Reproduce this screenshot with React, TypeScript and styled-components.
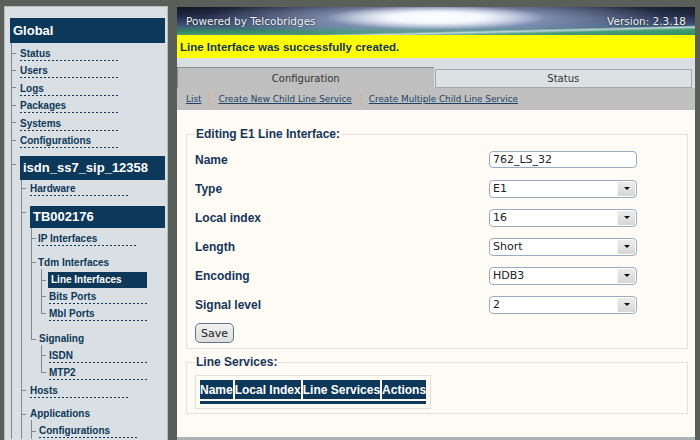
import styled, { createGlobalStyle } from "styled-components"

const GlobalStyle = createGlobalStyle`
body {
  margin: 0;
  background: #5b5f5a;
  font-family: "Liberation Sans", Arial, sans-serif;
  overflow: hidden;
}
`

const NAVY = "#0d3859"

const Page = styled.div`
display: flex;
align-items: flex-start;
padding-left: 4px;
height: 440px;
overflow: hidden;
`

/* ---------- sidebar ---------- */

const Sidebar = styled.div`
box-sizing: border-box;
width: 164px;
min-height: 480px;
margin-top: 6px;
background: #d9dfe2;
border: 1px solid #b5bcc0;
padding: 11px 2px 0 5px;
`

const Block = styled.div<{ $h: number }>`
background: ${NAVY};
color: #fff;
font-weight: bold;
font-size: 13px;
height: ${({ $h }) => $h}px;
line-height: ${({ $h }) => $h}px;
padding-left: 3px;
`

const Tree = styled.ul<{ $ml: number }>`
list-style: none;
margin: 0 0 0 ${({ $ml }) => $ml}px;
padding: 0;
`

const Node = styled.li<{ $pl: number; $pt: number; $tick: number; $last?: boolean }>`
position: relative;
padding-left: ${({ $pl }) => $pl}px;
padding-top: ${({ $pt }) => $pt}px;
&::before {
  content: "";
  position: absolute;
  left: 0;
  top: 0;
  ${({ $last, $tick }) => ($last ? `height: ${$tick}px;` : "bottom: 0;")}
  border-left: 1px solid #7f888d;
}
&::after {
  content: "";
  position: absolute;
  left: 0;
  top: ${({ $tick }) => $tick}px;
  width: 5px;
  border-top: 1px solid #7f888d;
}
`

const MenuLink = styled.div`
width: 98px;
font-size: 10px;
font-weight: bold;
color: ${NAVY};
line-height: 12px;
padding-top: 1px;
padding-bottom: 1px;
border-bottom: 1px solid transparent;
background: repeating-linear-gradient(to right, ${NAVY} 0 2px, transparent 2px 4px) left bottom / 100% 1px no-repeat;
`

const MenuHead = styled.div`
font-size: 10px;
font-weight: bold;
color: ${NAVY};
line-height: 12px;
padding-top: 1px;
`

const MenuActive = styled.div`
width: 96px;
height: 16px;
line-height: 16px;
padding-left: 3px;
background: ${NAVY};
color: #fff;
font-size: 10px;
font-weight: bold;
`

/* ---------- main ---------- */

const Main = styled.div`
margin-left: 9px;
margin-top: 7px;
width: 518px;
display: flex;
flex-direction: column;
`

const Banner = styled.div`
height: 28px;
display: flex;
justify-content: space-between;
align-items: center;
padding: 0 9px 0 9px;
color: #f2f4f8;
font-family: "DejaVu Sans", Verdana, sans-serif;
font-size: 10.5px;
text-shadow: 0 0 2px rgba(0, 0, 0, 0.7);
background:
  radial-gradient(ellipse 110px 12px at 50% 38%, #ffffff 0%, rgba(248, 250, 255, 0.95) 45%, rgba(180, 200, 240, 0) 100%),
  radial-gradient(ellipse 230px 20px at 50% 36%, rgba(200, 212, 245, 0.85), rgba(90, 110, 160, 0) 100%),
  radial-gradient(ellipse 360px 28px at 52% 30%, rgba(120, 140, 190, 0.6), rgba(40, 50, 90, 0) 100%),
  linear-gradient(178.6deg, rgba(0, 0, 0, 0) 76%, rgba(235, 248, 240, 0.85) 80%, rgba(60, 160, 105, 0.95) 86%, #2f8f5e 100%),
  linear-gradient(to bottom, #04050c 0%, #0c1226 28%, #2c3a5c 55%, #3a5f70 72%, #2e8a5c 88%, #4f9a74 100%);
`

const Message = styled.div`
background: #ffff00;
height: 23px;
line-height: 24px;
padding-left: 3px;
font-size: 11.5px;
font-weight: bold;
color: #17365a;
`

const Spacer = styled.div`
height: 9px;
background: #d9dfe2;
`

const Tabs = styled.div`
display: flex;
gap: 1px;
height: 21px;
background: #d9dfe2;
padding-right: 3px;
`

const Tab = styled.div<{ $active?: boolean }>`
box-sizing: border-box;
flex: 1;
margin-top: ${({ $active }) => ($active ? 0 : 2)}px;
background: ${({ $active }) => ($active ? "#bfbfbf" : "#dce1e4")};
border: 1px solid ${({ $active }) => ($active ? "#8d8d8d" : "#a3a7aa")};
border-bottom: ${({ $active }) => ($active ? "none" : "1px solid #a3a7aa")};
border-right: ${({ $active }) => ($active ? "none" : "1px solid #a3a7aa")};
display: flex;
align-items: center;
justify-content: center;
font-family: "DejaVu Sans", Verdana, sans-serif;
font-size: 10px;
color: #333;
`

const LinkBar = styled.div`
height: 22px;
background: #c0c0c0;
display: flex;
align-items: center;
gap: 8px;
padding-left: 9px;
font-family: "DejaVu Sans", Verdana, sans-serif;
font-size: 8.85px;
`

const NavLink = styled.span`
color: #1d4263;
text-decoration: underline;
`

const Sep = styled.span`
height: 12px;
border-left: 1px dashed #e2a86a;
`

const Content = styled.div`
height: 327px;
background: #fdfbf3;
padding-top: 17px;
box-sizing: border-box;
`

const Fieldset = styled.fieldset<{ $mt?: number }>`
margin: ${({ $mt }) => $mt || 0}px 7px 0 9px;
padding: 0 8px ${({ $mt }) => ($mt ? 4 : 5)}px 8px;
border: 1px solid #e3e1da;
`

const Legend = styled.legend`
padding: 0 1px;
font-size: 12px;
font-weight: bold;
color: #17365a;
line-height: 14px;
`

const FormGrid = styled.div`
display: grid;
grid-template-columns: 294px 148px;
grid-auto-rows: 29px;
align-items: center;
padding-top: 4px;
`

const Label = styled.div`
font-size: 12px;
font-weight: bold;
color: #17365a;
`

const TextInput = styled.div`
box-sizing: border-box;
height: 17px;
border: 1px solid #98adc4;
border-radius: 4px;
background: #fff;
padding-left: 3px;
font-family: "DejaVu Sans", Verdana, sans-serif;
font-size: 11px;
line-height: 15px;
color: #222;
`

const SelectBox = styled.div`
box-sizing: border-box;
height: 18px;
border: 1px solid #98adc4;
border-radius: 4px;
background: #fff;
display: flex;
align-items: center;
justify-content: space-between;
padding: 0 1px 0 3px;
font-family: "DejaVu Sans", Verdana, sans-serif;
font-size: 11px;
color: #222;
`

const Arrow = styled.span`
width: 17px;
height: 14px;
background: linear-gradient(#ececec, #d6d6d6);
border-left: 1px solid #f4f4f4;
display: flex;
align-items: center;
justify-content: center;
&::after {
  content: "";
  border-left: 3px solid transparent;
  border-right: 3px solid transparent;
  border-top: 3px solid #111;
}
`

const SaveButton = styled.button`
margin-top: 4px;
width: 39px;
height: 20px;
padding: 0;
border: 1px solid #5e7590;
border-radius: 5px;
background: linear-gradient(#f2f2f2, #dcdcdc);
font-family: "DejaVu Sans", Verdana, sans-serif;
font-size: 11px;
color: #222;
`

const Table = styled.table`
margin-top: 6px;
border: 1px solid #e2e0da;
padding: 2px;
border-spacing: 2px;
`

const Th = styled.th`
background: ${NAVY};
color: #fff;
font-size: 12px;
font-weight: bold;
height: 19px;
padding: 0;
text-align: left;
white-space: nowrap;
`

const BarCell = styled.td`
background: ${NAVY};
height: 3px;
padding: 0;
`

const Bottom = styled.div`
height: 6px;
background: #aeb3b6;
`

const selects = [
  { label: "Type", value: "E1" },
  { label: "Local index", value: "16" },
  { label: "Length", value: "Short" },
  { label: "Encoding", value: "HDB3" },
  { label: "Signal level", value: "2" },
]

const topItems = ["Status", "Users", "Logs", "Packages", "Systems", "Configurations"]

const App = () => {
  return (
    <>
      <GlobalStyle />
      <Page>
        <Sidebar>
          <Block $h={25}>Global</Block>
          <Tree $ml={1}>
            {topItems.map((t, i) => (
              <Node key={t} $pl={9} $pt={i === 0 ? 4 : 2.4} $tick={i === 0 ? 10 : 8}>
                <MenuLink>{t}</MenuLink>
              </Node>
            ))}
            <Node $pl={9} $pt={7} $tick={15}>
              <Block $h={24}>isdn_ss7_sip_12358</Block>
              <Tree $ml={1}>
                <Node $pl={9} $pt={2} $tick={8}>
                  <MenuLink>Hardware</MenuLink>
                </Node>
                <Node $pl={9} $pt={9} $tick={15}>
                  <Block $h={22}>TB002176</Block>
                  <Tree $ml={1}>
                    <Node $pl={7} $pt={4} $tick={10}>
                      <MenuLink>IP Interfaces</MenuLink>
                    </Node>
                    <Node $pl={7} $pt={9} $tick={15}>
                      <MenuHead>Tdm Interfaces</MenuHead>
                      <Tree $ml={3}>
                        <Node $pl={7} $pt={3} $tick={11}>
                          <MenuActive>Line Interfaces</MenuActive>
                        </Node>
                        <Node $pl={8} $pt={2} $tick={8}>
                          <MenuLink>Bits Ports</MenuLink>
                        </Node>
                        <Node $pl={8} $pt={2} $tick={8} $last>
                          <MenuLink>Mbl Ports</MenuLink>
                        </Node>
                      </Tree>
                    </Node>
                    <Node $pl={8} $pt={10} $tick={17} $last>
                      <MenuHead>Signaling</MenuHead>
                      <Tree $ml={2}>
                        <Node $pl={8} $pt={4} $tick={10}>
                          <MenuLink>ISDN</MenuLink>
                        </Node>
                        <Node $pl={8} $pt={2} $tick={8} $last>
                          <MenuLink>MTP2</MenuLink>
                        </Node>
                      </Tree>
                    </Node>
                  </Tree>
                </Node>
                <Node $pl={9} $pt={3} $tick={9}>
                  <MenuLink>Hosts</MenuLink>
                </Node>
                <Node $pl={9} $pt={8} $tick={15}>
                  <MenuHead>Applications</MenuHead>
                  <Tree $ml={1}>
                    <Node $pl={8} $pt={4} $tick={11}>
                      <MenuLink>Configurations</MenuLink>
                    </Node>
                  </Tree>
                </Node>
              </Tree>
            </Node>
          </Tree>
        </Sidebar>

        <Main>
          <Banner>
            <span>Powered by Telcobridges</span>
            <span>Version: 2.3.18</span>
          </Banner>
          <Message>Line Interface was successfully created.</Message>
          <Spacer />
          <Tabs>
            <Tab $active>Configuration</Tab>
            <Tab>Status</Tab>
          </Tabs>
          <LinkBar>
            <NavLink>List</NavLink>
            <Sep />
            <NavLink>Create New Child Line Service</NavLink>
            <Sep />
            <NavLink>Create Multiple Child Line Service</NavLink>
          </LinkBar>
          <Content>
            <Fieldset>
              <Legend>Editing E1 Line Interface:</Legend>
              <FormGrid>
                <Label>Name</Label>
                <TextInput>762_LS_32</TextInput>
                {selects.map((s) => (
                  <>
                    <Label key={s.label}>{s.label}</Label>
                    <SelectBox>
                      <span>{s.value}</span>
                      <Arrow />
                    </SelectBox>
                  </>
                ))}
              </FormGrid>
              <SaveButton>Save</SaveButton>
            </Fieldset>
            <Fieldset $mt={6}>
              <Legend>Line Services:</Legend>
              <Table>
                <thead>
                  <tr>
                    <Th>Name</Th>
                    <Th>Local Index</Th>
                    <Th>Line Services</Th>
                    <Th>Actions</Th>
                  </tr>
                </thead>
                <tbody>
                  <tr>
                    <BarCell colSpan={4} />
                  </tr>
                </tbody>
              </Table>
            </Fieldset>
          </Content>
          <Bottom />
        </Main>
      </Page>
    </>
  )
}

export default App
